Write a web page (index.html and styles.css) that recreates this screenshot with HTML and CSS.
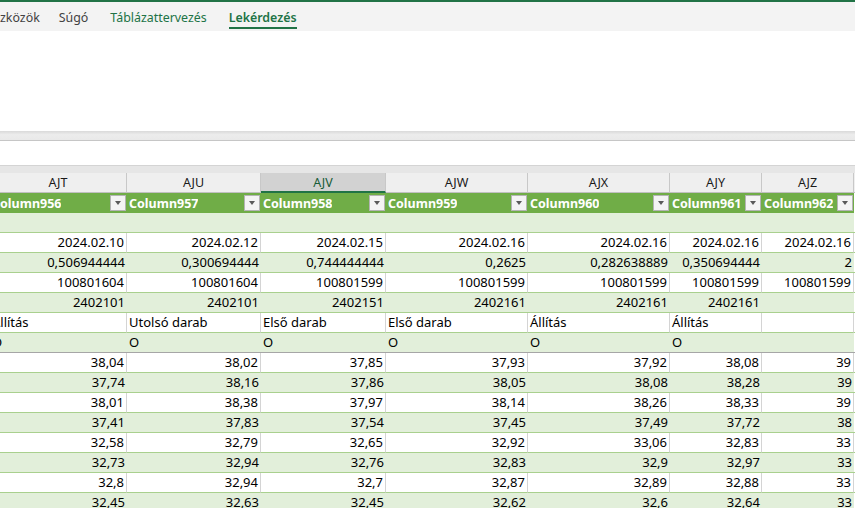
FILE: index.html
```html
<!DOCTYPE html>
<html lang="hu">
<head>
<meta charset="utf-8">
<title>Lekérdezés</title>
<link rel="stylesheet" href="styles.css">
</head>
<body>
<div class="topline"></div>
<nav class="tabs">
  <span class="tab">zközök</span>
  <span class="tab">Súgó</span>
  <span class="tab ctx">Táblázattervezés</span>
  <span class="tab ctx active">Lekérdezés</span>
</nav>
<div class="ribbon"></div>
<div class="ribbon-shadow"></div>
<div class="formula"></div>
<div class="gap"></div>
<div class="sheet">
  <div class="row colheads">
    <div class="ch">AJT</div><div class="ch">AJU</div><div class="ch sel">AJV</div><div class="ch">AJW</div><div class="ch">AJX</div><div class="ch">AJY</div><div class="ch">AJZ</div><div class="ch"></div>
  </div>
  <div class="row thead">
    <div class="th"><span class="lbl">Column956</span><span class="dd"></span></div>
    <div class="th"><span class="lbl">Column957</span><span class="dd"></span></div>
    <div class="th"><span class="lbl">Column958</span><span class="dd"></span></div>
    <div class="th"><span class="lbl">Column959</span><span class="dd"></span></div>
    <div class="th"><span class="lbl">Column960</span><span class="dd"></span></div>
    <div class="th"><span class="lbl">Column961</span><span class="dd"></span></div>
    <div class="th"><span class="lbl">Column962</span><span class="dd"></span></div>
    <div class="fill"></div>
  </div>
  <div class="row g"><div></div><div></div><div></div><div></div><div></div><div></div><div></div><div class="fill"></div></div>
  <div class="row w n"><div>2024.02.10</div><div>2024.02.12</div><div>2024.02.15</div><div>2024.02.16</div><div>2024.02.16</div><div>2024.02.16</div><div>2024.02.16</div><div class="fill"></div></div>
  <div class="row g n"><div>0,506944444</div><div>0,300694444</div><div>0,744444444</div><div>0,2625</div><div>0,282638889</div><div>0,350694444</div><div>2</div><div class="fill"></div></div>
  <div class="row w n"><div>100801604</div><div>100801604</div><div>100801599</div><div>100801599</div><div>100801599</div><div>100801599</div><div>100801599</div><div class="fill"></div></div>
  <div class="row g n"><div>2402101</div><div>2402101</div><div>2402151</div><div>2402161</div><div>2402161</div><div>2402161</div><div></div><div class="fill"></div></div>
  <div class="row w t"><div>Állítás</div><div>Utolsó darab</div><div>Első darab</div><div>Első darab</div><div>Állítás</div><div>Állítás</div><div></div><div class="fill"></div></div>
  <div class="row g t freeze"><div>O</div><div>O</div><div>O</div><div>O</div><div>O</div><div>O</div><div></div><div class="fill"></div></div>
  <div class="row w n"><div>38,04</div><div>38,02</div><div>37,85</div><div>37,93</div><div>37,92</div><div>38,08</div><div>39</div><div class="fill"></div></div>
  <div class="row g n"><div>37,74</div><div>38,16</div><div>37,86</div><div>38,05</div><div>38,08</div><div>38,28</div><div>39</div><div class="fill"></div></div>
  <div class="row w n"><div>38,01</div><div>38,38</div><div>37,97</div><div>38,14</div><div>38,26</div><div>38,33</div><div>39</div><div class="fill"></div></div>
  <div class="row g n"><div>37,41</div><div>37,83</div><div>37,54</div><div>37,45</div><div>37,49</div><div>37,72</div><div>38</div><div class="fill"></div></div>
  <div class="row w n"><div>32,58</div><div>32,79</div><div>32,65</div><div>32,92</div><div>33,06</div><div>32,83</div><div>33</div><div class="fill"></div></div>
  <div class="row g n"><div>32,73</div><div>32,94</div><div>32,76</div><div>32,83</div><div>32,9</div><div>32,97</div><div>33</div><div class="fill"></div></div>
  <div class="row w n"><div>32,8</div><div>32,94</div><div>32,7</div><div>32,87</div><div>32,89</div><div>32,88</div><div>33</div><div class="fill"></div></div>
  <div class="row g n"><div>32,45</div><div>32,63</div><div>32,45</div><div>32,62</div><div>32,6</div><div>32,64</div><div>33</div><div class="fill"></div></div>
</div>
</body>
</html>
```
FILE: styles.css
```css
* { box-sizing: border-box; }
html, body { margin: 0; padding: 0; }
body {
  width: 855px;
  height: 508px;
  overflow: hidden;
  background: #fff;
  font-family: "Noto Sans", "Open Sans", sans-serif;
}

.topline { height: 2px; background: #217346; }

.tabs {
  height: 29px;
  background: #f3f3f3;
  display: flex;
  gap: 19px;
  padding-top: 1px;
  font-size: 12.4px;
  color: #424242;
  white-space: nowrap;
}
.tab {
  display: flex;
  align-items: center;
  position: relative;
}
.tab.ctx { color: #217346; margin-left: 3px; }
.tab.active { font-weight: 600; }
.tab.active::after {
  content: "";
  position: absolute;
  left: 0;
  right: 0;
  bottom: 2px;
  height: 2px;
  background: #217346;
}

.ribbon { height: 100px; background: #fff; }
.ribbon-shadow {
  height: 10px;
  background: linear-gradient(#d9d9d9, #ececec 40%, #e9e9e9);
  border-bottom: 1px solid #c6c6c6;
}
.formula { height: 25px; background: #fff; border-bottom: 1px solid #d4d4d4; }
.gap { height: 7px; background: #e6e6e6; }

.sheet { margin-left: -10px; width: 880px; }

.row {
  display: grid;
  grid-template-columns: 137px 134px 125px 142px 142px 92px 92px 16px;
  height: 20px;
  font-size: 13px;
  color: #000;
}
.row > div {
  overflow: hidden;
  white-space: nowrap;
  line-height: 19px;
}

.colheads { background: #e6e6e6; }
.colheads .ch {
  background: #efefef;
  border-right: 1px solid #c8c8c8;
  border-bottom: 1px solid #c0c0c0;
  text-align: center;
  font-size: 12.5px;
  color: #1a1a1a;
  line-height: 19px;
}
.colheads .ch.sel {
  background: #d2d2d2;
  border-bottom: 2px solid #217346;
  color: #185c37;
}

.thead { background: #70ad47; }
.thead .th {
  display: flex;
  align-items: center;
  justify-content: space-between;
  padding: 0 1px 0 2px;
  color: #fff;
  font-weight: 700;
  font-size: 12.5px;
}
.thead .lbl { overflow: hidden; }
.thead .fill { background: #fff; }
.dd {
  flex: none;
  width: 16px;
  height: 16px;
  background: #f4f4f4;
  border: 1px solid #b4b4b4;
  display: flex;
  align-items: center;
  justify-content: center;
}
.dd::before {
  content: "";
  border-left: 3.5px solid transparent;
  border-right: 3.5px solid transparent;
  border-top: 4px solid #5a5a5a;
}

.row.g > div {
  background: #e2efda;
  border-bottom: 1px solid #a9d08e;
}
.row.w > div {
  background: #fff;
  border-bottom: 1px solid #a9d08e;
  border-right: 1px solid #d4d4d4;
}
.row > div.fill { background: #fff; border-right: none; }
.row.freeze > div { border-bottom-color: #a6a6a6; }

.row.n > div { text-align: right; padding-right: 2px; }
.row.t > div { text-align: left; padding-left: 2px; }
```
